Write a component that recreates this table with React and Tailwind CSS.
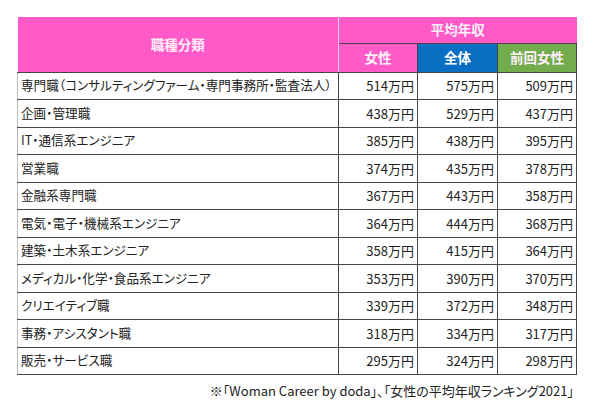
const rows = [
  ["専門職（コンサルティングファーム・専門事務所・監査法人）", "514万円", "575万円", "509万円"],
  ["企画・管理職", "438万円", "529万円", "437万円"],
  ["IT・通信系エンジニア", "385万円", "438万円", "395万円"],
  ["営業職", "374万円", "435万円", "378万円"],
  ["金融系専門職", "367万円", "443万円", "358万円"],
  ["電気・電子・機械系エンジニア", "364万円", "444万円", "368万円"],
  ["建築・土木系エンジニア", "358万円", "415万円", "364万円"],
  ["メディカル・化学・食品系エンジニア", "353万円", "390万円", "370万円"],
  ["クリエイティブ職", "339万円", "372万円", "348万円"],
  ["事務・アシスタント職", "318万円", "334万円", "317万円"],
  ["販売・サービス職", "295万円", "324万円", "298万円"],
];

export default function App() {
  return (
    <div
      className="w-[600px] h-[408px] bg-white pt-[17px] pl-[17px] text-[#222] [font-feature-settings:'palt']"
      style={{ fontFamily: '"Noto Sans CJK JP", "Noto Sans", sans-serif' }}
    >
      <table className="w-[559px] border-collapse table-fixed text-[13px] leading-none">
        <colgroup>
          <col className="w-[321px]" />
          <col className="w-[79px]" />
          <col className="w-[80px]" />
          <col className="w-[79px]" />
        </colgroup>
        <thead className="text-[#fff0fa] font-bold text-[13.5px]">
          <tr className="h-[26px]">
            <th rowSpan={2} className="bg-[#ff5ac8] border-b border-b-[#444] border-r border-r-[#f0d0e8]">
              職種分類
            </th>
            <th colSpan={3} className="bg-[#ff5ac8] border-b border-[#5a3a50]">
              平均年収
            </th>
          </tr>
          <tr className="h-[29px]">
            <th className="bg-[#ff5ac8] border border-[#444] border-t-[#5a3a50] border-l-[#f0d0e8]">女性</th>
            <th className="bg-[#0a6fc2] border border-[#444] text-white">全体</th>
            <th className="bg-[#72ac4c] border border-[#444]">前回女性</th>
          </tr>
        </thead>
        <tbody>
          {rows.map((r) => (
            <tr key={r[0]} className="h-[27.5px]">
              <td className="border border-[#444] border-l-[#bbb] pl-[3px] whitespace-nowrap text-[12.6px]">{r[0]}</td>
              <td className="border border-[#444] text-right pr-[3px]">{r[1]}</td>
              <td className="border border-[#444] text-right pr-[3px]">{r[2]}</td>
              <td className="border border-[#444] text-right pr-[3px]">{r[3]}</td>
            </tr>
          ))}
        </tbody>
      </table>
      <div className="w-[559px] text-right text-[13px] mt-[9px] leading-none pr-[2px]">
        ※「Woman Career by doda」、「女性の平均年収ランキング2021」
      </div>
    </div>
  );
}
